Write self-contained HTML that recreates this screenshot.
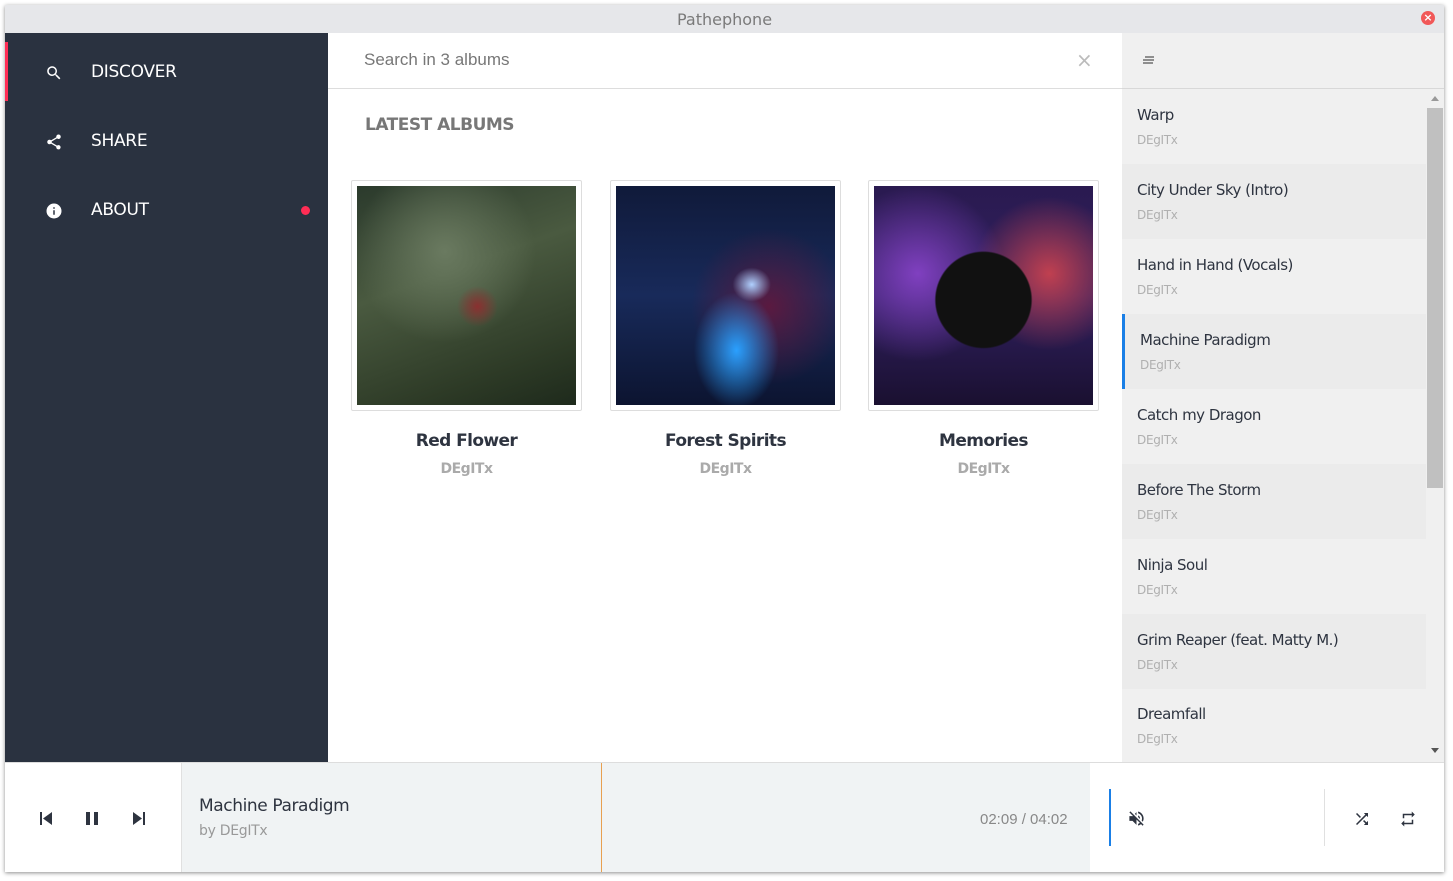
<!DOCTYPE html>
<html><head><meta charset="utf-8"><style>
*{margin:0;padding:0;box-sizing:border-box}
body{width:1453px;height:881px;background:#fff;font-family:"DejaVu Sans","Liberation Sans",sans-serif;position:relative;overflow:hidden}
.a{position:absolute}
.win{left:5px;top:5px;width:1439px;height:867px;box-shadow:0 1px 4px rgba(0,0,0,.45);background:#fff}
.title{left:5px;top:5px;width:1439px;height:28px;background:#e6e7ea;text-align:center;font-size:16px;color:#7a7a7a;line-height:29px}
.side{left:5px;top:33px;width:323px;height:729px;background:#2a3240}
.nav{left:5px;width:323px;height:69px;color:#fff;font-size:17px;line-height:71px;letter-spacing:-.3px}
.nav span{position:absolute;left:86px}
.nav svg{position:absolute;left:40px;top:27px}
.search{left:328px;top:33px;width:794px;height:56px;border-bottom:1px solid #ddd;background:#fff}
.card{width:231px;height:231px;border:1px solid #ddd;border-radius:2px;background:#fff}
.card div{position:absolute;left:5px;top:5px;width:219px;height:219px}
.ct{width:231px;text-align:center;font-size:17px;font-weight:bold;color:#2e3440;letter-spacing:-.6px}
.cs{width:231px;text-align:center;font-size:14px;font-weight:bold;color:#aaa;letter-spacing:-.5px}
.rp{left:1122px;top:33px;width:322px;height:729px;background:#f0f0f0}
.it{left:1122px;width:304px;height:75px}
.it b{position:absolute;left:15px;top:17px;font-weight:normal;font-size:15px;color:#2e3440;letter-spacing:-.5px}
.it i{position:absolute;left:15px;top:44px;font-style:normal;font-size:12px;color:#b0b0b0;letter-spacing:-.3px}
.pl{left:5px;top:762px;width:1439px;height:110px;border-top:1px solid #ddd;background:#fff}
</style></head><body>
<div class="a win"></div>
<div class="a title">Pathephone</div>
<div class="a" style="left:1421px;top:11px;width:14px;height:14px;border-radius:7px;background:#f15858;color:#fff;font-size:11px;line-height:14px;text-align:center;font-weight:bold">×</div>
<div class="a side"></div>
<div class="a" style="left:5px;top:42px;width:3px;height:59px;background:#ff2d55"></div>
<div class="a nav" style="top:37px"><svg width="18" height="18" viewBox="0 0 24 24"><path fill="#fff" d="M15.5 14h-.8l-.3-.3A6.5 6.5 0 1 0 9.5 16a6.5 6.5 0 0 0 4.2-1.6l.3.3v.8l5 5 1.5-1.5-5-5zm-6 0A4.5 4.5 0 1 1 14 9.5 4.5 4.5 0 0 1 9.5 14z"/></svg><span>DISCOVER</span></div>
<div class="a nav" style="top:106px"><svg width="18" height="18" viewBox="0 0 24 24"><path fill="#fff" d="M18 16.1c-.8 0-1.5.3-2 .8l-7.1-4.2c.1-.2.1-.5.1-.7s0-.5-.1-.7L16 7.2c.5.5 1.2.8 2 .8a3 3 0 1 0-3-3c0 .2 0 .5.1.7L8 9.8C7.5 9.3 6.8 9 6 9a3 3 0 1 0 0 6c.8 0 1.5-.3 2-.8l7.1 4.2c-.1.2-.1.4-.1.6a2.9 2.9 0 1 0 3-2.9z"/></svg><span>SHARE</span></div>
<div class="a nav" style="top:175px"><svg width="18" height="18" viewBox="0 0 24 24"><path fill="#fff" d="M12 2a10 10 0 1 0 0 20 10 10 0 0 0 0-20zm1 15h-2v-6h2v6zm0-8h-2V7h2v2z"/></svg><span>ABOUT</span></div>
<div class="a" style="left:301px;top:206px;width:9px;height:9px;border-radius:5px;background:#ff2d55"></div>
<div class="a search"><span class="a" style="left:36px;top:17px;font-family:'Liberation Sans',sans-serif;font-size:17px;color:#777">Search in 3 albums</span><span class="a" style="left:748px;top:15px;font-size:20px;color:#bbb">×</span></div>
<div class="a" style="left:365px;top:115px;font-size:17px;font-weight:bold;color:#777;letter-spacing:-.5px">LATEST ALBUMS</div>
<div class="a card" style="left:351px;top:180px"><div style="background:radial-gradient(circle at 55% 55%,#8a3030 0,transparent 12%),radial-gradient(circle at 40% 30%,#6a7a60,transparent 45%),linear-gradient(160deg,#2b3a2c,#4a5a40 40%,#2d3a26 80%,#1e2a1c)"></div></div>
<div class="a card" style="left:610px;top:180px"><div style="background:radial-gradient(ellipse at 62% 45%,#b0d0ff 0,transparent 10%),radial-gradient(ellipse at 55% 75%,#2aa0ff 0,transparent 25%),radial-gradient(circle at 70% 55%,#5a1a40,transparent 40%),linear-gradient(180deg,#101a3a,#182a5a 50%,#0c1430)"></div></div>
<div class="a card" style="left:868px;top:180px"><div style="background:radial-gradient(circle at 50% 52%,#111 0,#111 30%,transparent 31%),radial-gradient(circle at 80% 40%,#c04050,transparent 35%),radial-gradient(circle at 20% 40%,#8040c0,transparent 40%),linear-gradient(180deg,#2a1a50,#302060 50%,#1a1030)"></div></div>
<div class="a ct" style="left:351px;top:431px">Red Flower</div>
<div class="a ct" style="left:610px;top:431px">Forest Spirits</div>
<div class="a ct" style="left:868px;top:431px">Memories</div>
<div class="a cs" style="left:351px;top:461px">DEgITx</div>
<div class="a cs" style="left:610px;top:461px">DEgITx</div>
<div class="a cs" style="left:868px;top:461px">DEgITx</div>
<div class="a rp"></div>
<div class="a" style="left:1122px;top:88px;width:322px;height:1px;background:#d8d8d8"></div>
<svg class="a" style="left:1142px;top:56px" width="14" height="8"><path d="M3 1h9M1 4h11M1 7h10" stroke="#555" stroke-width="1.3"/></svg>
<div class="a it" style="top:89px"><b>Warp</b><i>DEgITx</i></div>
<div class="a it" style="top:164px;background:#ebebeb"><b>City Under Sky (Intro)</b><i>DEgITx</i></div>
<div class="a it" style="top:239px"><b>Hand in Hand (Vocals)</b><i>DEgITx</i></div>
<div class="a it" style="top:314px;background:#ebebeb;border-left:3px solid #1a7fe6"><b>Machine Paradigm</b><i>DEgITx</i></div>
<div class="a it" style="top:389px"><b>Catch my Dragon</b><i>DEgITx</i></div>
<div class="a it" style="top:464px;background:#ebebeb"><b>Before The Storm</b><i>DEgITx</i></div>
<div class="a it" style="top:539px"><b>Ninja Soul</b><i>DEgITx</i></div>
<div class="a it" style="top:614px;background:#ebebeb"><b>Grim Reaper (feat. Matty M.)</b><i>DEgITx</i></div>
<div class="a it" style="top:688px;height:74px"><b>Dreamfall</b><i>DEgITx</i></div>
<div class="a" style="left:1427px;top:108px;width:16px;height:380px;background:#c0c0c0"></div>
<div class="a" style="left:1431px;top:96px;border:4px solid transparent;border-bottom:5px solid #999;border-top:0"></div>
<div class="a" style="left:1431px;top:748px;border:4px solid transparent;border-top:5px solid #555;border-bottom:0"></div>
<div class="a pl"></div>
<div class="a" style="left:181px;top:763px;width:909px;height:109px;background:#f0f3f4;border-left:1px solid #e0e0e0"></div>
<div class="a" style="left:601px;top:763px;width:1px;height:109px;background:#e8a050"></div>
<svg class="a" style="left:39px;top:812px" width="14" height="13"><path d="M1 0h2v13H1zM13 0v13L4 6.5z" fill="#2e3440"/></svg>
<svg class="a" style="left:86px;top:812px" width="12" height="13"><path d="M0 0h4v13H0zM8 0h4v13H8z" fill="#2e3440"/></svg>
<svg class="a" style="left:132px;top:812px" width="14" height="13"><path d="M11 0h2v13h-2zM1 0v13l9-6.5z" fill="#2e3440"/></svg>
<div class="a" style="left:199px;top:796px;font-size:17px;color:#2e3440;letter-spacing:-.4px">Machine Paradigm</div>
<div class="a" style="left:199px;top:823px;font-size:14px;color:#999;letter-spacing:-.3px">by DEgITx</div>
<div class="a" style="left:980px;top:811px;font-family:'Liberation Sans',sans-serif;font-size:15px;color:#888">02:09 / 04:02</div>
<div class="a" style="left:1109px;top:789px;width:2px;height:57px;background:#1a7fe6"></div>
<svg class="a" style="left:1127px;top:809px" width="19" height="19" viewBox="0 0 24 24"><path fill="#2e3440" d="M16.5 12A4.5 4.5 0 0 0 14 8v2.2l2.5 2.5v-.7zM19 12c0 .9-.2 1.8-.5 2.6l1.5 1.5A8.8 8.8 0 0 0 21 12c0-4.3-3-7.9-7-8.8v2.1c2.9.9 5 3.5 5 6.7zM4.3 3 3 4.3 7.7 9H3v6h4l5 5v-6.7l4.3 4.3c-.7.5-1.4.9-2.3 1.2v2.1c1.4-.3 2.6-1 3.7-1.8l2 2 1.3-1.3-9-9L4.3 3zM12 4 9.9 6.1 12 8.2V4z"/></svg>
<div class="a" style="left:1324px;top:789px;width:1px;height:57px;background:#e0e0e0"></div>
<svg class="a" style="left:1353px;top:810px" width="18" height="18" viewBox="0 0 24 24"><path fill="#2e3440" d="M10.6 9.2 5.4 4 4 5.4l5.2 5.2 1.4-1.4zM14.5 4l2 2L4 18.6 5.4 20 18 7.5l2 2V4h-5.5zm.3 9.4-1.4 1.4 3.1 3.1L14.5 20H20v-5.5l-2 2-3.2-3.1z"/></svg>
<svg class="a" style="left:1399px;top:810px" width="18" height="18" viewBox="0 0 24 24"><path fill="#2e3440" d="M7 7h10v3l4-4-4-4v3H5v6h2V7zm10 10H7v-3l-4 4 4 4v-3h12v-6h-2v4z"/></svg>
</body></html>
